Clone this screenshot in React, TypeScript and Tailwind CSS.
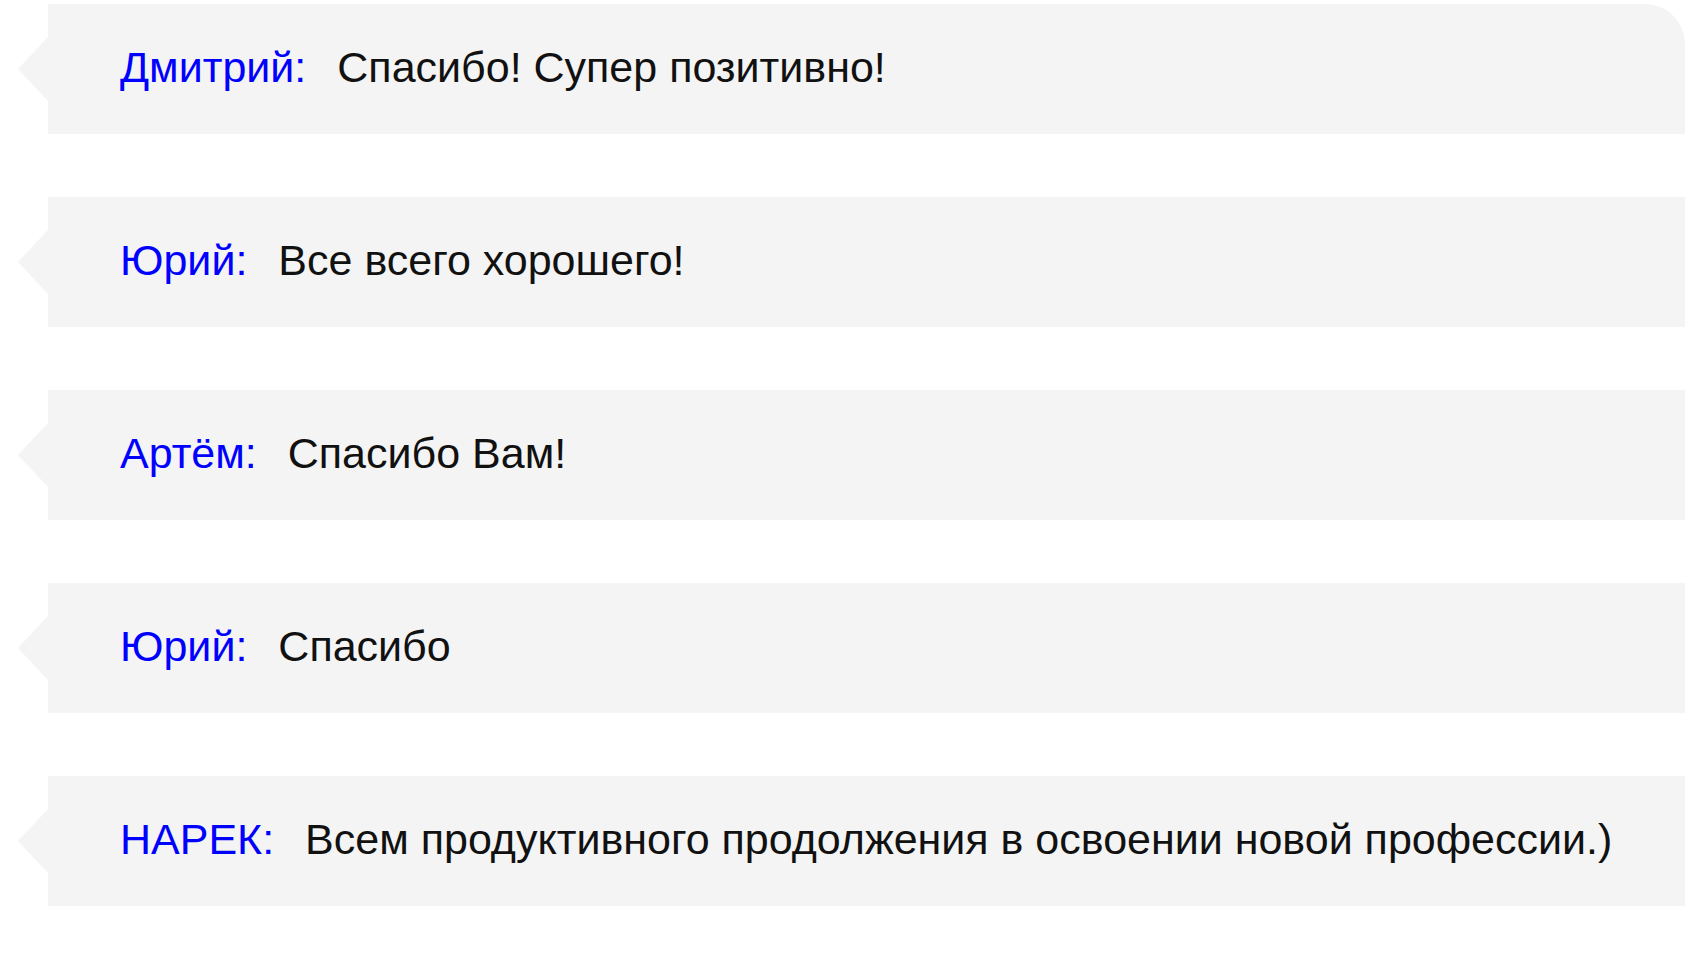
const messages = [
  { name: 'Дмитрий:', text: 'Спасибо! Супер позитивно!' },
  { name: 'Юрий:', text: 'Все всего хорошего!' },
  { name: 'Артём:', text: 'Спасибо Вам!' },
  { name: 'Юрий:', text: 'Спасибо' },
  { name: 'НАРЕК:', text: 'Всем продуктивного продолжения в освоении новой профессии.)' },
];

function Bubble({ name, text, first }: { name: string; text: string; first?: boolean }) {
  return (
    <div
      className={`relative ml-[48px] h-[130px] bg-[#f4f4f4] flex items-center pl-[72px] pb-[4px] ${
        first ? 'rounded-tr-[40px]' : ''
      }`}
    >
      {/* left pointer */}
      <div className="absolute left-[-30px] top-1/2 -translate-y-1/2 w-0 h-0 border-y-[32px] border-y-transparent border-r-[30px] border-r-[#f4f4f4]" />
      <span className="text-[#0000ff]">{name}</span>
      <span className="ml-[31px] text-[#111111]">{text}</span>
    </div>
  );
}

export default function App() {
  return (
    <div
      className="w-[1685px] h-[961px] bg-white overflow-hidden pt-[4px] flex flex-col gap-[63px] text-[43px] leading-none"
      style={{ fontFamily: '"Liberation Sans", Arial, sans-serif' }}
    >
      {messages.map((m, i) => (
        <Bubble key={i} name={m.name} text={m.text} first={i === 0} />
      ))}
    </div>
  );
}
